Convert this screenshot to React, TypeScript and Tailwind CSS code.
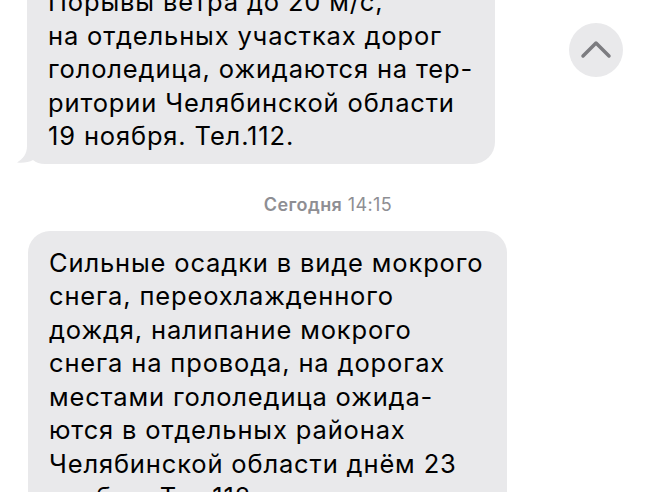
import React from "react";

const firstLines = [
  "Порывы ветра до 20 м/с,",
  "на отдельных участках дорог",
  "гололедица, ожидаются на тер-",
  "ритории Челябинской области",
  "19 ноября. Тел.112.",
];

const secondLines = [
  "Сильные осадки в виде мокрого",
  "снега, переохлажденного",
  "дождя, налипание мокрого",
  "снега на провода, на дорогах",
  "местами гололедица ожида-",
  "ются в отдельных районах",
  "Челябинской области днём 23",
  "ноября. Тел.112.",
];

function Tail() {
  return (
    <svg
      className="absolute bottom-0 left-[-10px]"
      width="40"
      height="30"
      viewBox="0 0 40 30"
      fill="#e9e9eb"
    >
      <path d="M10 0 H40 V30 H28 C23 30 19 28.5 16 26 C12 28.5 6 29 0 28.5 C6 25 10 20 10 12 Z" />
    </svg>
  );
}

function Bubble({
  lines,
  className,
  tail,
}: {
  lines: string[];
  className: string;
  tail?: boolean;
}) {
  return (
    <div className={`relative rounded-[22px] bg-[#e9e9eb] pl-[21px] text-[25.5px] leading-[33.5px] tracking-[0.85px] text-black ${className}`}>
      {tail && <Tail />}
      {lines.map((l, i) => (
        <div key={i} className="relative whitespace-nowrap">
          {l}
        </div>
      ))}
    </div>
  );
}

export default function App() {
  return (
    <div
      className="relative h-[492px] w-[656px] overflow-hidden bg-white"
      style={{ fontFamily: "Inter, 'Liberation Sans', sans-serif" }}
    >
      <div className="flex flex-col items-start">
        <Bubble
          lines={firstLines}
          tail
          className="ml-[27px] mt-[-25px] w-[468px] pt-[10px] pb-[11px]"
        />
        <div className="mt-[30px] w-full text-center text-[18px] leading-[22px] tracking-[0.4px] text-[#8e8e93]">
          <span className="font-semibold">Сегодня</span> 14:15
        </div>
        <Bubble
          lines={secondLines}
          className="ml-[28px] mt-[15px] w-[479px] pt-[15px] pb-[11px]"
        />
      </div>

      <button className="absolute left-[569px] top-[23px] flex h-[54px] w-[54px] items-center justify-center rounded-full bg-[#e9e9eb]">
        <svg width="54" height="54" viewBox="0 0 54 54" fill="none">
          <polyline
            points="14,33 27,20 40,33"
            stroke="#7c7c80"
            strokeWidth="3.5"
            strokeLinecap="round"
            strokeLinejoin="round"
          />
        </svg>
      </button>
    </div>
  );
}
